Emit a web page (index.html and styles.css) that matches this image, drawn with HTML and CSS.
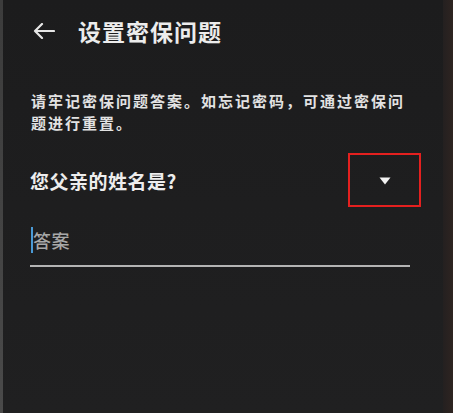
FILE: index.html
```html
<!DOCTYPE html>
<html lang="zh-CN">
<head>
<meta charset="utf-8">
<title>设置密保问题</title>
<link rel="stylesheet" href="styles.css">
</head>
<body>
<div class="screen">
  <div class="edge-left"></div>
  <main class="content">
    <header class="header">
      <svg class="back" width="22" height="16" viewBox="0 0 22 16" aria-hidden="true">
        <path d="M21 8H2M9 1L2 8l7 7" fill="none" stroke="#e6e6e6" stroke-width="2.2" stroke-linecap="round" stroke-linejoin="round"/>
      </svg>
      <h1 class="title">设置密保问题</h1>
    </header>
    <p class="desc">请牢记密保问题答案。如忘记密码，可通过密保问题进行重置。</p>
    <div class="question-row">
      <span class="question">您父亲的姓名是?</span>
      <div class="dropdown">
        <svg width="12" height="8" viewBox="0 0 12 8" aria-hidden="true"><path d="M0.5 0.5h11L6 7.5z" fill="#f2f2f2"/></svg>
      </div>
    </div>
    <div class="answer">
      <span class="cursor"></span>
      <span class="placeholder">答案</span>
    </div>
  </main>
  <div class="edge-right"></div>
</div>
</body>
</html>
```

FILE: styles.css
```css
html, body {
  margin: 0;
  padding: 0;
  background: #1e1e1f;
}
body {
  font-family: "Noto Sans CJK SC", "Noto Sans", sans-serif;
  color: #e8e8e8;
}
.screen {
  display: flex;
  width: 453px;
  height: 413px;
  overflow: hidden;
  background: linear-gradient(#1c1c1d, #202021);
}
.edge-left {
  width: 3px;
  background: linear-gradient(#3c3c3c, #4a4a4a);
}
.edge-right {
  width: 10px;
  background: linear-gradient(to right, #242020, #2e2421);
}
.content {
  flex: 1;
  padding: 0 33px 0 27px;
  display: flex;
  flex-direction: column;
}
.header {
  height: 62px;
  display: flex;
  align-items: center;
  padding-left: 3px;
}
.back {
  flex: none;
  display: block;
}
.title {
  margin: 0 0 0 23px;
  font-size: 23px;
  font-weight: 700;
  color: #ececec;
  letter-spacing: 1px;
  line-height: 30px;
}
.desc {
  margin: 28px 0 0 1px;
  font-size: 15px;
  line-height: 22px;
  font-weight: 700;
  letter-spacing: 2px;
  color: #e2e2e2;
}
.question-row {
  margin-top: 19px;
  display: flex;
  align-items: center;
  justify-content: space-between;
}
.question {
  font-size: 19px;
  font-weight: 700;
  color: #ededed;
  letter-spacing: 0.5px;
}
.dropdown {
  width: 69px;
  height: 50px;
  margin-right: -11px;
  border: 2px solid #e4201f;
  display: flex;
  align-items: center;
  justify-content: center;
}
.dropdown svg {
  display: block;
  margin-top: 1px;
}
.answer {
  margin-top: 20px;
  height: 26px;
  padding: 0 0 12px 1px;
  border-bottom: 2px solid #b4b4b4;
  display: flex;
  align-items: center;
}
.cursor {
  width: 2px;
  height: 26px;
  background: #4a9ad6;
}
.placeholder {
  font-size: 18px;
  font-weight: 500;
  color: #a8a8a8;
  letter-spacing: 0.5px;
}
```
